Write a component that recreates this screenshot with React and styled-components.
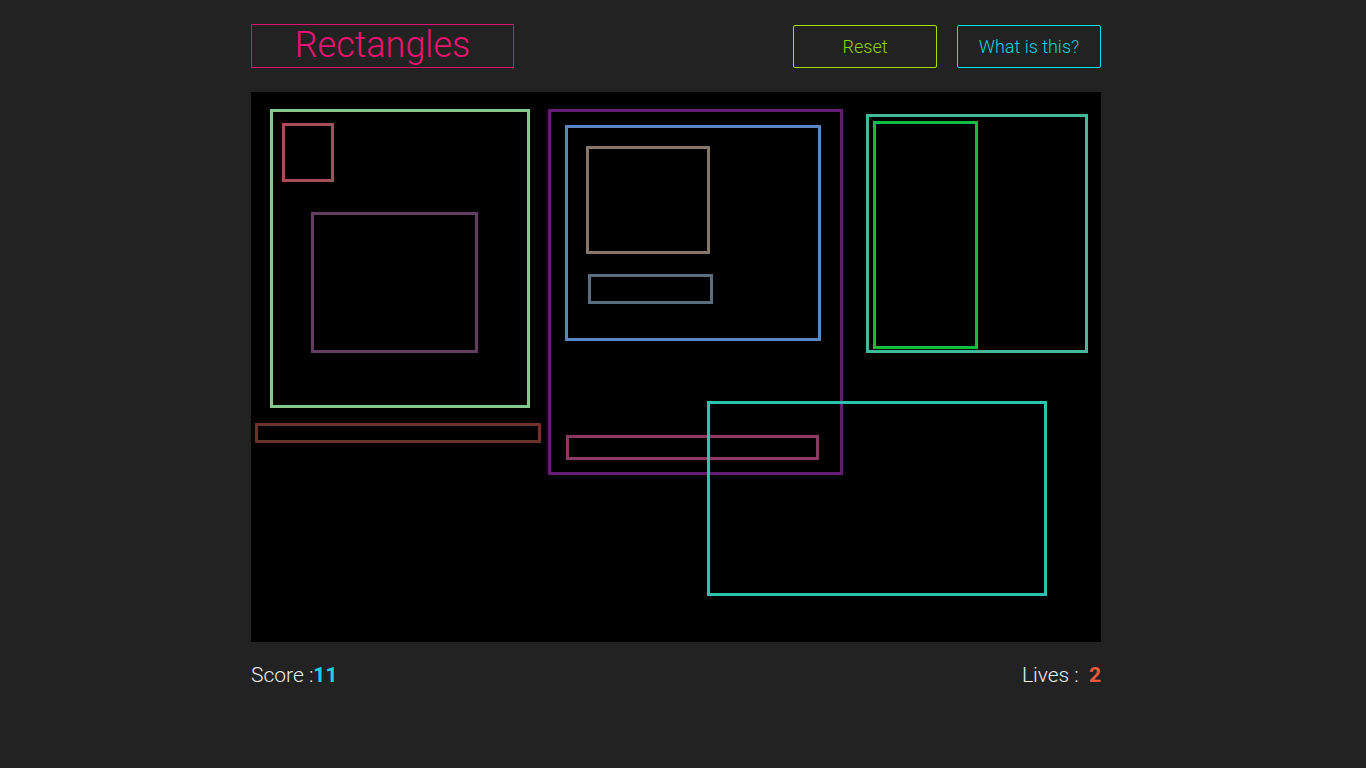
import React from 'react';
import styled, { createGlobalStyle } from 'styled-components';

const GlobalStyle = createGlobalStyle`
  html, body {
    margin: 0;
    padding: 0;
    background-color: #222222;
    font-family: Roboto, "Liberation Sans", sans-serif;
  }
`;

// leaves room on the right like the reference's scrollbar gutter
const Page = styled.div`
  min-height: 1917px;
  padding-right: 14px;
`;

const Container = styled.div`
  width: 850px;
  margin: 0 auto;
  padding-top: 24px;
`;

const Header = styled.header`
  display: flex;
  justify-content: space-between;
  align-items: center;
  height: 44px;
`;

const Title = styled.h1`
  box-sizing: border-box;
  width: 263px;
  height: 44px;
  margin: 0;
  border: 1px solid #e2126c;
  color: #ee1271;
  font-size: 36px;
  font-weight: 300;
  line-height: 40px;
  text-align: center;
`;

const Actions = styled.div`
  display: flex;
  gap: 20px;
`;

const Button = styled.button`
  box-sizing: border-box;
  width: 144px;
  height: 43px;
  margin-top: 1px;
  background: transparent;
  border: 1px solid ${(p) => p.$border};
  border-radius: 2px;
  color: ${(p) => p.$color};
  font-family: Roboto, "Liberation Sans", sans-serif;
  font-size: 18px;
  font-weight: 300;
  cursor: pointer;
`;

const Board = styled.div`
  margin-top: 24px;
  width: 850px;
  height: 550px;
  background-color: #000;
`;

const Footer = styled.footer`
  display: flex;
  justify-content: space-between;
  align-items: center;
  margin-top: 21px;
  color: #ececec;
  font-size: 21px;
  font-weight: 300;
`;

const Value = styled.span`
  font-weight: 700;
  color: ${(p) => p.$color};
`;

const rects = [
  { x: 19, y: 17, w: 260, h: 299, c: '#87c98c' },
  { x: 31, y: 31, w: 52, h: 59, c: '#a84b5b' },
  { x: 60, y: 120, w: 167, h: 141, c: '#633d62' },
  { x: 4, y: 331, w: 286, h: 20, c: '#6b3329' },
  { x: 297, y: 17, w: 295, h: 366, c: '#641c74' },
  { x: 314, y: 33, w: 256, h: 216, c: '#5b86c6' },
  { x: 335, y: 54, w: 124, h: 108, c: '#87776b' },
  { x: 337, y: 182, w: 125, h: 30, c: '#5a6e80' },
  { x: 315, y: 343, w: 253, h: 25, c: '#8b3a62' },
  { x: 615, y: 22, w: 222, h: 239, c: '#43b99b' },
  { x: 622, y: 29, w: 105, h: 228, c: '#0fbf40' },
  { x: 456, y: 309, w: 340, h: 195, c: '#2cc4b0' },
];

export default function App() {
  return (
    <Page>
      <GlobalStyle />
      <Container>
        <Header>
          <Title>Rectangles</Title>
          <Actions>
            <Button $border="#a6e000" $color="#8fd000">Reset</Button>
            <Button $border="#00e8ee" $color="#14d0dc">What is this?</Button>
          </Actions>
        </Header>
        <Board>
          <svg width="850" height="550" viewBox="0 0 850 550">
            {rects.map((r, i) => (
              <rect
                key={i}
                x={r.x + 1.5}
                y={r.y + 1.5}
                width={r.w - 3}
                height={r.h - 3}
                fill="none"
                stroke={r.c}
                strokeWidth="3"
              />
            ))}
          </svg>
        </Board>
        <Footer>
          <span>
            Score :<Value $color="#1ad3e0">11</Value>
          </span>
          <span>
            Lives :&nbsp; <Value $color="#ff5a3c">2</Value>
          </span>
        </Footer>
      </Container>
    </Page>
  );
}
